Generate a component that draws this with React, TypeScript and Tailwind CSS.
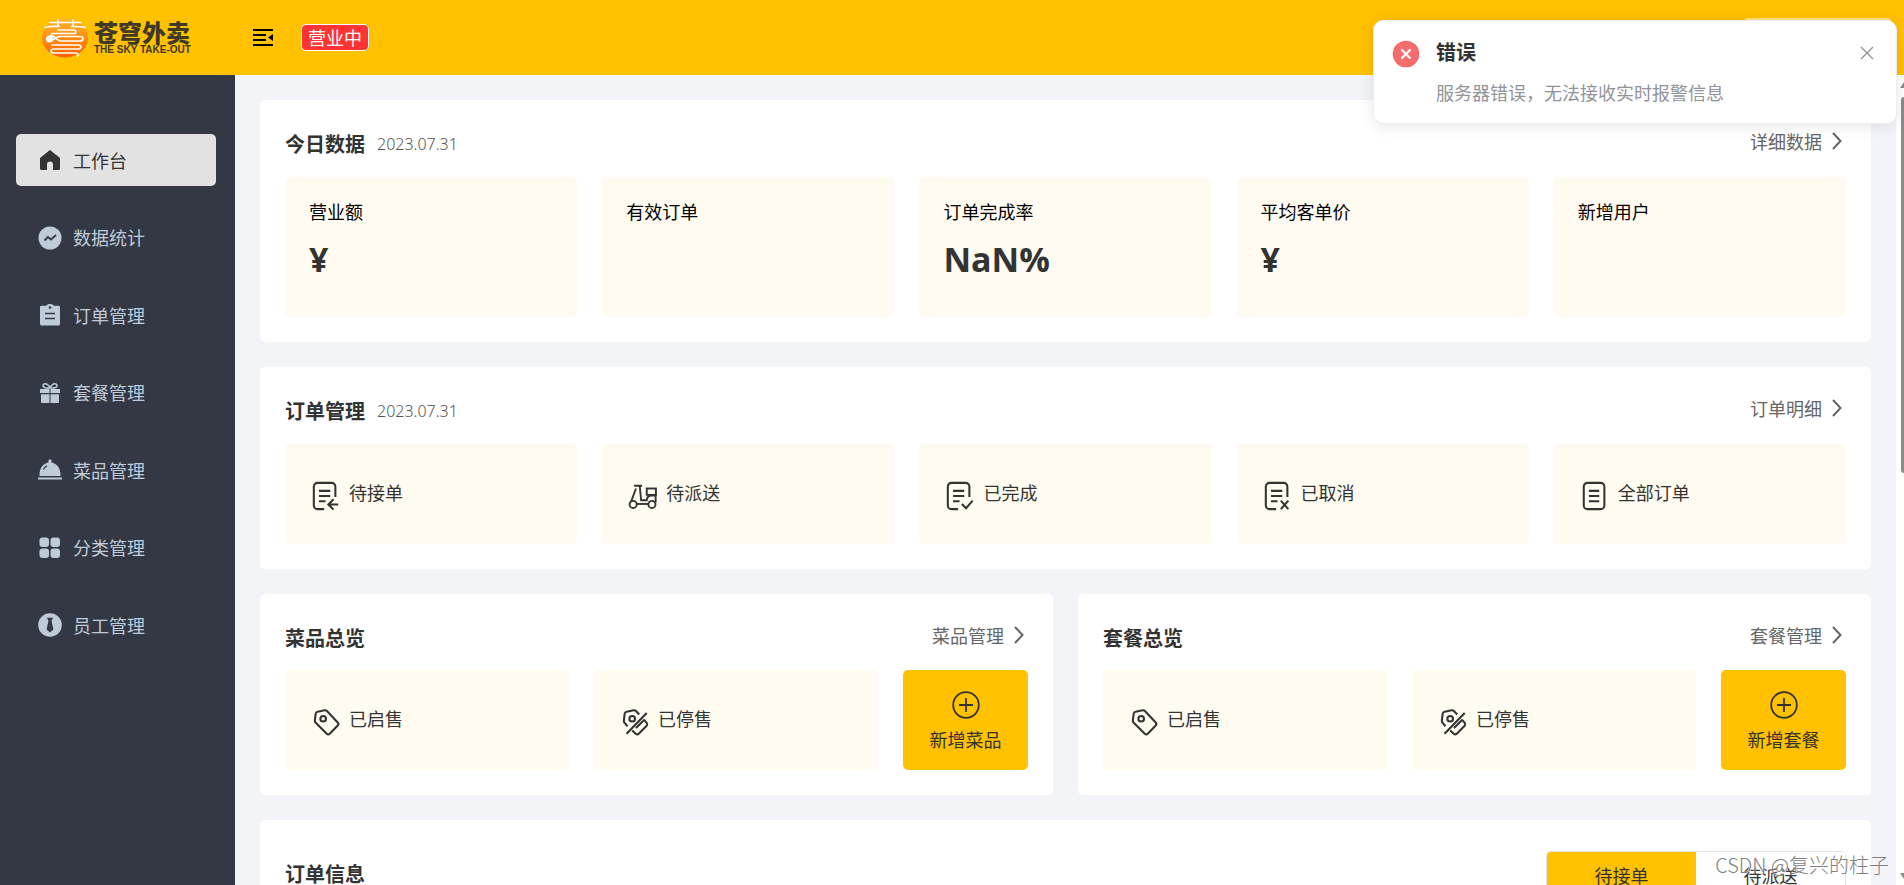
import type { ReactNode } from 'react';

type IconProps = { className?: string };

function LogoMark() {
  return (
    <svg viewBox="0 0 46 40" className="h-10 w-[46px]" aria-hidden="true">
      <defs>
        <linearGradient id="logoFill" x1="0" y1="0" x2="0" y2="1">
          <stop offset="0" stopColor="#ffb52e" />
          <stop offset="0.5" stopColor="#ff8d10" />
          <stop offset="1" stopColor="#fd5f00" />
        </linearGradient>
      </defs>
      <ellipse cx="23" cy="20" rx="23" ry="19.5" fill="url(#logoFill)" />
      <g fill="none" stroke="#fff" strokeWidth="1.7" strokeLinecap="round" strokeLinejoin="round">
        <path d="M8 4.500h31M16 2v6M31 2v6M3 9.500c5-1.500 9-1 14-1M30 8.500c6 0 9 0 13 1" />
        <path d="M16 12h15c4 0 4 3.500 0 3.500H12c-4 0-4 3 0 3" />
        <path d="M10 22c3 0 4-3.500 8-3.500h20c4 0 4 4.500 0 4.500H19c-4 0-5-4-9-5" />
        <path d="M10 27h26c4 0 4 4 0 4H12c-4 0-4 4 0 4h21c3 0 4 1.500 2.500 3" />
      </g>
      <circle cx="7.500" cy="21" r="3.600" fill="#fff" />
    </svg>
  );
}

function FoldIcon() {
  return (
    <svg viewBox="0 0 20 20" className="size-5" aria-hidden="true">
      <path d="M0 1h20v2H0zM0 6h13v2H0zM0 11h13v2H0zM0 16h20v2H0zM20 6v7l-5-3.500z" fill="#000" />
    </svg>
  );
}

function HomeIcon({ className }: IconProps) {
  return (
    <svg viewBox="0 0 24 24" className={className} fill="currentColor" aria-hidden="true">
      <path d="M12 2 2.600 9.600C2.200 10 2 10.400 2 10.900V20.500c0 .8.600 1.500 1.500 1.500H9v-5.500a3 3 0 0 1 6 0V22h5.500c.9 0 1.500-.7 1.500-1.500v-9.600c0-.5-.2-.9-.6-1.300z" />
    </svg>
  );
}

function StatsIcon({ className }: IconProps) {
  return (
    <svg viewBox="0 0 24 24" className={className} aria-hidden="true">
      <circle cx="12" cy="12" r="11.500" fill="currentColor" />
      <path d="m6.500 14.500 3.500-3.500 3 2.500 5-4.500" fill="none" stroke="#343744" strokeWidth="1.800" />
    </svg>
  );
}

function ClipboardIcon({ className }: IconProps) {
  return (
    <svg viewBox="0 0 24 24" className={className} aria-hidden="true">
      <path d="M3.500 2.800H8C9 1.500 10.500.9 12 .9s3 .6 4 1.900h4.500c.8 0 1.500.6 1.500 1.400v16.900c0 .8-.7 1.400-1.500 1.400h-17c-.8 0-1.500-.6-1.500-1.400V4.200c0-.8.700-1.400 1.500-1.400z" fill="currentColor" />
      <circle cx="12" cy="4.500" r="1.300" fill="#343744" />
      <path d="M7 10.500h10M7 15.500h10" stroke="#343744" strokeWidth="1.600" />
    </svg>
  );
}

function GiftIcon({ className }: IconProps) {
  return (
    <svg viewBox="0 0 24 24" className={className} aria-hidden="true">
      <path d="M2 8h9.500v4H2zM12.500 8H22v4h-9.500zM3 13.200h8.500V22H4a1 1 0 0 1-1-1zM12.500 13.200H21V21a1 1 0 0 1-1 1h-7.500z" fill="currentColor" />
      <path d="M12 7C9.500 7 5 7.500 5 4.800 5 2 9.500 1.500 12 7zM12 7c2.500 0 7 .5 7-2.200C19 2 14.500 1.500 12 7z" fill="none" stroke="currentColor" strokeWidth="1.500" />
    </svg>
  );
}

function DishIcon({ className }: IconProps) {
  return (
    <svg viewBox="0 0 24 24" className={className} aria-hidden="true">
      <path d="M10.500 3.500a1.600 1.600 0 1 1 3 0v1C19 5.500 22.500 10 22.500 17v1h-21v-1C1.500 10 5 5.500 10.500 4.500z" fill="currentColor" />
      <path d="M0 19.500h24v2H0z" fill="currentColor" />
      <path d="M5.500 11.500c.7-1.800 2-3 3.500-3.700" fill="none" stroke="#343744" strokeWidth="1.300" />
    </svg>
  );
}

function GridIcon({ className }: IconProps) {
  return (
    <svg viewBox="0 0 24 24" className={className} fill="currentColor" aria-hidden="true">
      <rect x="1.500" y="1.500" width="9.500" height="9.500" rx="3" />
      <rect x="12.500" y="1.500" width="9.500" height="9.500" rx="3" />
      <rect x="1.500" y="12.500" width="9.500" height="9.500" rx="3" />
      <rect x="12.500" y="12.500" width="9.500" height="9.500" rx="3" />
    </svg>
  );
}

function StaffIcon({ className }: IconProps) {
  return (
    <svg viewBox="0 0 24 24" className={className} aria-hidden="true">
      <circle cx="12" cy="12" r="11.800" fill="currentColor" />
      <path d="M8.800 4.800h6.400l-1.700 3 1.900 8.700L12 19.500l-3.400-3 1.900-8.700z" fill="#343744" />
    </svg>
  );
}

function SheetIcon({ variant }: { variant: 'arrow' | 'check' | 'cross' | 'plain' }) {
  const outline =
    variant === 'plain'
      ? 'M8 2h14a4 4 0 0 1 4 4v20a4 4 0 0 1-4 4H8a4 4 0 0 1-4-4V6a4 4 0 0 1 4-4z'
      : 'M26 17V6a4 4 0 0 0-4-4H7a4 4 0 0 0-4 4v20a4 4 0 0 0 4 4h7';
  return (
    <svg viewBox="0 0 32 32" className="size-[30px]" fill="none" stroke="#333" strokeWidth="2.200" aria-hidden="true">
      <path d={outline} />
      <path d={variant === 'plain' ? 'M9.500 10.500h11M9.500 16h11M9.500 21.500h11' : 'M8.500 10.500h12M8.500 16h12M8.500 21.500h7'} />
      {variant === 'arrow' && <path d="M29 25H19M24 19.500 18.500 25l5.500 5.500" />}
      {variant === 'check' && <path d="m18 24.500 4.500 4.500 7-8" />}
      {variant === 'cross' && <path d="m19 21 8 9M27 21l-8 9" />}
    </svg>
  );
}

function ScooterIcon() {
  return (
    <svg viewBox="0 0 32 32" className="size-[30px]" fill="none" stroke="#333" strokeWidth="2" aria-hidden="true">
      <path d="M6.500 5h8.500M12.500 5l1.500 15.500h6c.3-3.500 2-5 5-5h4.500V23M8.500 8 3.500 21.500" />
      <rect x="20" y="8" width="9.800" height="6.800" />
      <circle cx="5.500" cy="25" r="3.800" />
      <circle cx="25.500" cy="25" r="3.800" />
      <path d="M9.500 24.500h12" />
    </svg>
  );
}

function TagIcon({ off = false }: { off?: boolean }) {
  return (
    <svg viewBox="0 0 32 32" className="size-[30px]" fill="none" stroke="#333" strokeWidth="2.200" strokeLinejoin="round" aria-hidden="true">
      {off ? (
        <>
          <path d="M8 20.500 5 17c-.8-.8-1-1.500-.9-2.500L5 7c.2-1.200.8-1.800 2-2l7.500-1.500c1-.2 1.800.1 2.500.8L20.500 8M25.500 13.500l3 3.500c.8 1 .8 2 0 3L20 28.500c-1 1-2.200 1-3.200 0L13 25" />
          <path d="M28.500 6.500 7 28.500M17 22.500l9-9" />
        </>
      ) : (
        <path d="M5 7c.2-1.200.8-1.800 2-2l7.500-1.500c1-.2 1.800.1 2.500.8L28.500 16.500c1 1 1 2.200 0 3.200L20 28.500c-1 1-2.200 1-3.200 0L4.800 16.500c-.6-.6-.8-1.500-.7-2.300z" />
      )}
      <circle cx="13" cy="12.500" r="3" />
    </svg>
  );
}

function PlusCircleIcon() {
  return (
    <svg viewBox="0 0 28 28" className="size-7" fill="none" stroke="#333" strokeWidth="1.800" aria-hidden="true">
      <circle cx="14" cy="14" r="12.800" />
      <path d="M14 7v14M7 14h14" />
    </svg>
  );
}

function Chevron() {
  return (
    <svg viewBox="0 0 10 18" className="h-[18px] w-[10px]" fill="none" stroke="#666" strokeWidth="2" aria-hidden="true">
      <path d="m1 1 7.500 8L1 17" />
    </svg>
  );
}

const menu = [
  { label: '工作台', Icon: HomeIcon },
  { label: '数据统计', Icon: StatsIcon },
  { label: '订单管理', Icon: ClipboardIcon },
  { label: '套餐管理', Icon: GiftIcon },
  { label: '菜品管理', Icon: DishIcon },
  { label: '分类管理', Icon: GridIcon },
  { label: '员工管理', Icon: StaffIcon },
];

const today = [
  { label: '营业额', value: '¥' },
  { label: '有效订单', value: '' },
  { label: '订单完成率', value: 'NaN%' },
  { label: '平均客单价', value: '¥' },
  { label: '新增用户', value: '' },
];

const orders = [
  { label: '待接单', icon: <SheetIcon variant="arrow" /> },
  { label: '待派送', icon: <ScooterIcon /> },
  { label: '已完成', icon: <SheetIcon variant="check" /> },
  { label: '已取消', icon: <SheetIcon variant="cross" /> },
  { label: '全部订单', icon: <SheetIcon variant="plain" /> },
];

function Card({ title, date, link, children }: { title: string; date?: string; link: string; children: ReactNode }) {
  return (
    <section className="rounded-[5px] bg-white px-[25px] pb-[25px]">
      <div className={date ? 'flex h-[77px] items-start justify-between pt-[25px]' : 'flex h-[76px] items-start justify-between pt-[25px]'}>
        <h2 className="flex items-center gap-3 pt-1 text-xl leading-[30px] font-bold text-[#333]">
          {title}
          {date && <span className="font-['Noto_Sans',sans-serif] text-base leading-[30px] font-light text-[#555]">{date}</span>}
        </h2>
        <a href="#" className="flex items-center gap-[10px] pt-[2px] pr-1 leading-[28px] text-[#666]">
          {link}
          <Chevron />
        </a>
      </div>
      {children}
    </section>
  );
}

function Tile({ icon, label }: { icon: ReactNode; label: string }) {
  return (
    <div className="flex h-[100px] min-w-0 flex-1 items-center gap-2 rounded-[5px] bg-[#fffbf0] pl-[26px] text-[#333]">
      <span className="pt-1">{icon}</span>
      <span className="pb-[3px]">{label}</span>
    </div>
  );
}

function Overview({ title, link, add }: { title: string; link: string; add: string }) {
  return (
    <Card title={title} link={link}>
      <div className="flex gap-[25px]">
        <Tile icon={<TagIcon />} label="已启售" />
        <Tile icon={<TagIcon off />} label="已停售" />
        <button type="button" className="flex h-[100px] w-[125px] flex-col items-center justify-center gap-[6px] rounded-[5px] bg-[#ffc100] pt-1 text-[#333]">
          <PlusCircleIcon />
          <span className="leading-7">{add}</span>
        </button>
      </div>
    </Card>
  );
}

export default function App() {
  return (
    <div className="relative flex h-screen flex-col overflow-hidden bg-white font-['Noto_Sans_CJK_SC',sans-serif] text-[18px] font-normal">
      <header className="flex h-[75px] shrink-0 items-center bg-[#ffc100]">
        <div className="flex w-[253px] items-center gap-[6px] pl-[42px]">
          <LogoMark />
          <div className="flex flex-col text-[#3f3a28]">
            <span className="text-2xl leading-6 font-black">苍穹外卖</span>
            <span className="font-['Liberation_Sans',sans-serif] text-[10px] leading-3 font-bold whitespace-nowrap">THE SKY TAKE-OUT</span>
          </div>
        </div>
        <button type="button" aria-label="收起菜单">
          <FoldIcon />
        </button>
        <span className="ml-7 flex h-[27px] items-center rounded-[5px] border border-white bg-[#ff3333] px-[6px] text-white">营业中</span>
      </header>

      <div className="flex min-h-0 flex-1">
        <nav className="w-[235px] shrink-0 bg-[#343744] px-4 pt-[59px]">
          <ul className="flex h-[517px] flex-col justify-between">
            {menu.map(({ label, Icon }, i) => (
              <li key={label}>
                <a
                  href="#"
                  className={
                    i === 0
                      ? 'mr-[3px] flex h-[52px] items-center gap-[11px] rounded-[5px] bg-[#e2e2e2] pl-[22px] text-[#333]'
                      : 'mr-[3px] flex h-[52px] items-center gap-[11px] rounded-[5px] pl-[22px] text-[#bfcbd9]'
                  }
                >
                  <Icon className="size-6" />
                  {label}
                </a>
              </li>
            ))}
          </ul>
        </nav>

        <main className="flex min-w-0 flex-1 flex-col gap-[25px] overflow-hidden bg-[#f3f4f8] p-[25px]">
          <Card title="今日数据" date="2023.07.31" link="详细数据">
            <div className="grid grid-cols-5 gap-[25px]">
              {today.map((t) => (
                <div key={t.label} className="h-[140px] rounded-[5px] bg-[#fffbf0] px-6 pt-[19px]">
                  <div className="leading-[30px] text-black">{t.label}</div>
                  <div className="pt-2 font-['Open_Sans','Noto_Sans_CJK_SC',sans-serif] text-[34px] leading-[50px] font-bold text-[#333]">{t.value}</div>
                </div>
              ))}
            </div>
          </Card>
          <Card title="订单管理" date="2023.07.31" link="订单明细">
            <div className="flex gap-[25px]">
              {orders.map((o) => (
                <Tile key={o.label} icon={o.icon} label={o.label} />
              ))}
            </div>
          </Card>
          <div className="grid grid-cols-2 gap-[25px]">
            <Overview title="菜品总览" link="菜品管理" add="新增菜品" />
            <Overview title="套餐总览" link="套餐管理" add="新增套餐" />
          </div>
          <section className="flex items-start justify-between rounded-[5px] bg-white px-[25px] pt-[31px] pb-[25px]">
            <h2 className="pt-2 text-xl leading-[30px] font-bold text-[#333]">订单信息</h2>
            <div className="flex w-[300px] overflow-hidden rounded-[5px] border border-[#e5e4e4] text-[#333]">
              <button type="button" className="h-[46px] flex-1 bg-[#ffc100]">待接单</button>
              <button type="button" className="h-[46px] flex-1 bg-white">待派送</button>
            </div>
          </section>
        </main>

        <div className="flex w-2 shrink-0 flex-col items-end overflow-hidden bg-white" aria-hidden="true">
          <svg viewBox="0 0 4 22" className="h-[22px] w-1">
            <path d="M0 13 4 7v6z" fill="#8b8b8b" />
          </svg>
          <div className="h-[376px] w-[3px] rounded-l-[3px] bg-[#8b8b8b]" />
          <svg viewBox="0 0 4 8" className="mt-auto mb-1 h-2 w-1">
            <path d="M0 0h4v6z" fill="#8b8b8b" />
          </svg>
        </div>
      </div>

      <div className="absolute top-[18px] right-3 h-10 w-[149px] rounded-[5px] bg-white/50" />

      <div role="alert" className="absolute top-5 right-[7px] flex h-[104px] w-[524px] items-start rounded-[10px] border border-[#ebeef5] bg-white pt-4 pr-[22px] pl-[18px] shadow-[0_2px_15px_rgba(0,0,0,0.1)]">
        <svg viewBox="0 0 28 28" className="mt-[3px] size-7 shrink-0" aria-hidden="true">
          <circle cx="14" cy="14" r="13.300" fill="#f56c6c" />
          <path d="m10 10 8 8M18 10l-8 8" stroke="#fff" strokeWidth="2.200" strokeLinecap="round" />
        </svg>
        <div className="flex-1 pl-4">
          <h2 className="text-xl leading-[30px] font-bold text-[#303133]">错误</h2>
          <p className="pt-3 leading-[26px] text-[#909399]">服务器错误，无法接收实时报警信息</p>
        </div>
        <button type="button" aria-label="关闭" className="mt-[9px]">
          <svg viewBox="0 0 14 14" className="size-[14px]" fill="none" stroke="#909399" strokeWidth="1.400">
            <path d="m1 1 12 12M13 1 1 13" />
          </svg>
        </button>
      </div>

      <div className="pointer-events-none absolute right-[15px] bottom-[5px] text-xl leading-[30px] font-light text-[#808080] [text-shadow:0_0_2px_#fff]">CSDN @复兴的柱子</div>
    </div>
  );
}
